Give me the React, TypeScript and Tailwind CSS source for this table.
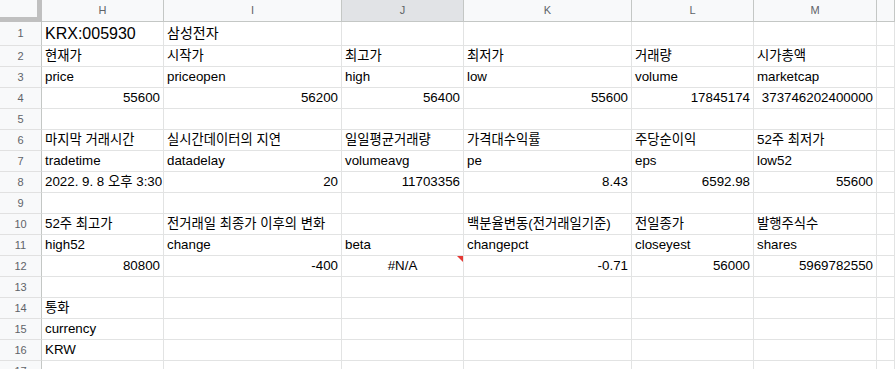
import React from 'react';

// 시트 열 정의 (너비는 오른쪽 테두리 포함)
const COLUMNS = [
  { key: 'H', width: 122 },
  { key: 'I', width: 178 },
  { key: 'J', width: 122 },
  { key: 'K', width: 168 },
  { key: 'L', width: 122 },
  { key: 'M', width: 123 },
  { key: '', width: 18 },
];

type Cell = { v: string; right?: boolean; size?: 'big' | 'mid'; error?: boolean } | null;

const t = (v: string): Cell => ({ v });
const n = (v: string): Cell => ({ v, right: true });

// 행 데이터 (H ~ M)
const ROWS: Cell[][] = [
  [{ v: 'KRX:005930', size: 'big' }, { v: '삼성전자', size: 'mid' }, null, null, null, null],
  [t('현재가'), t('시작가'), t('최고가'), t('최저가'), t('거래량'), t('시가총액')],
  [t('price'), t('priceopen'), t('high'), t('low'), t('volume'), t('marketcap')],
  [n('55600'), n('56200'), n('56400'), n('55600'), n('17845174'), n('373746202400000')],
  [null, null, null, null, null, null],
  [t('마지막 거래시간'), t('실시간데이터의 지연'), t('일일평균거래량'), t('가격대수익률'), t('주당순이익'), t('52주 최저가')],
  [t('tradetime'), t('datadelay'), t('volumeavg'), t('pe'), t('eps'), t('low52')],
  [t('2022. 9. 8 오후 3:30'), n('20'), n('11703356'), n('8.43'), n('6592.98'), n('55600')],
  [null, null, null, null, null, null],
  [t('52주 최고가'), t('전거래일 최종가 이후의 변화'), null, t('백분율변동(전거래일기준)'), t('전일종가'), t('발행주식수')],
  [t('high52'), t('change'), t('beta'), t('changepct'), t('closeyest'), t('shares')],
  [n('80800'), n('-400'), { v: '#N/A', error: true }, n('-0.71'), n('56000'), n('5969782550')],
  [null, null, null, null, null, null],
  [t('통화'), null, null, null, null, null],
  [t('currency'), null, null, null, null, null],
  [t('KRW'), null, null, null, null, null],
  [null, null, null, null, null, null],
];

const FONT = 'font-["Liberation_Sans","Noto_Sans_CJK_KR",sans-serif]';

export default function App() {
  return (
    <div className={`w-[895px] h-[369px] overflow-hidden bg-white ${FONT} text-[#000]`}>
      {/* 열 머리글 */}
      <div className="flex h-[22px]">
        <div className="w-[42px] h-[22px] shrink-0 bg-[#f8f9fa] border-r-[5px] border-b-[5px] border-[#c0c0c0]" />
        {COLUMNS.map((col, i) => (
          <div
            key={i}
            style={{ width: col.width }}
            className={`shrink-0 h-[22px] flex items-center justify-center text-[11px] text-[#5f6368] border-r border-b border-[#c4c7c5] ${
              col.key === 'J' ? 'bg-[#e1e3e6]' : 'bg-[#f8f9fa]'
            }`}
          >
            {col.key}
          </div>
        ))}
      </div>

      {/* 본문 행 */}
      {ROWS.map((row, r) => {
        const tall = r === 0;
        return (
          <div key={r} className={`flex ${tall ? 'h-[24px]' : 'h-[21px]'}`}>
            <div className="w-[42px] shrink-0 flex items-center justify-center text-[11px] text-[#5f6368] bg-[#f8f9fa] border-r border-r-[#c4c7c5] border-b border-b-[#e1e1e1]">
              {r + 1}
            </div>
            {COLUMNS.map((col, c) => {
              const cell = c < 6 ? row[c] : null;
              const size =
                cell?.size === 'big' ? 'text-[16px]' : cell?.size === 'mid' ? 'text-[14px]' : 'text-[13.33px]';
              return (
                <div
                  key={c}
                  style={{ width: col.width }}
                  className={`relative shrink-0 border-r border-b border-[#e2e3e3] whitespace-nowrap px-[3px] ${size} ${
                    tall ? 'leading-[23px]' : 'leading-[20px]'
                  } ${cell?.right ? 'text-right' : cell?.error ? 'text-center' : 'text-left'}`}
                >
                  {cell?.v}
                  {cell?.error && (
                    <span className="absolute top-0 right-0 w-0 h-0 border-t-[6px] border-t-[#e53935] border-l-[6px] border-l-transparent" />
                  )}
                </div>
              );
            })}
          </div>
        );
      })}
    </div>
  );
}
